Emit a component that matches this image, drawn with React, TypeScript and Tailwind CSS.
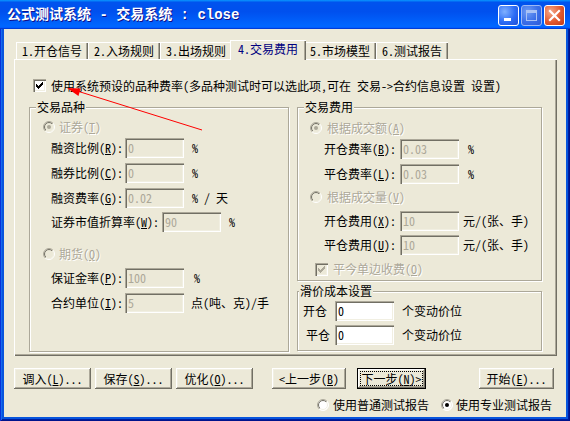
import React from "react";

const SUNKEN =
  "shadow-[inset_1px_1px_0_#aca899,inset_2px_2px_0_#716f64,inset_-1px_-1px_0_#ffffff,inset_-2px_-2px_0_#f1efe2]";
const RAISED =
  "shadow-[inset_-1px_-1px_0_#716f64,inset_1px_1px_0_#ffffff,inset_-2px_-2px_0_#aca899,inset_2px_2px_0_#f1efe2]";
const ETCHED =
  "border border-[#aca899] shadow-[inset_1px_1px_0_#ffffff,1px_1px_0_#ffffff]";
const DIS = "text-[#aca899] [text-shadow:1px_1px_0_#ffffff]";

function Input({
  value,
  disabled = true,
  className = "",
}: {
  value: string;
  disabled?: boolean;
  className?: string;
}) {
  return (
    <div
      className={`h-[20px] shrink-0 pl-[3px] pt-[1px] leading-[17px] ${SUNKEN} ${
        disabled ? "bg-[#ece9d8] text-[#aca899]" : "bg-white text-black"
      } ${className}`}
    >
      {value}
    </div>
  );
}

function Radio({ checked, disabled }: { checked?: boolean; disabled?: boolean }) {
  return (
    <svg width="12" height="12" viewBox="0 0 12 12" className="block shrink-0">
      <circle cx="6" cy="6" r="5.5" fill={disabled ? "#ece9d8" : "#ffffff"} stroke="url(#rgo)" />
      <circle cx="6" cy="6" r="4.5" fill="none" stroke="url(#rgi)" />
      {checked && <circle cx="6" cy="6" r="2" fill={disabled ? "#aca899" : "#000000"} />}
    </svg>
  );
}

function Check({ disabled }: { disabled?: boolean }) {
  return (
    <div className={`w-[13px] h-[13px] shrink-0 ${SUNKEN} ${disabled ? "bg-[#ece9d8]" : "bg-white"}`}>
      <svg width="13" height="13" viewBox="0 0 13 13" className="block">
        <path
          fill={disabled ? "#aca899" : "#000000"}
          d="M9 3h1v1h-1z M8 4h2v1h-2z M3 5h1v1h-1z M7 5h3v1h-3z M3 6h2v1h-2z M6 6h3v1h-3z M3 7h5v1h-5z M4 8h3v1h-3z M5 9h1v1h-1z"
        />
      </svg>
    </div>
  );
}

function Btn({ children, className = "" }: { children: React.ReactNode; className?: string }) {
  return (
    <div
      className={`h-[21px] shrink-0 flex items-center justify-center whitespace-nowrap bg-[#ece9d8] ${RAISED} ${className}`}
    >
      {children}
    </div>
  );
}

function Row({
  label,
  value,
  unit,
  labelW,
  className = "",
  unitMl = "ml-[8px]",
}: {
  label: React.ReactNode;
  value: string;
  unit?: React.ReactNode;
  labelW: string;
  className?: string;
  unitMl?: string;
}) {
  return (
    <div className={`flex items-center h-[20px] ${className}`}>
      <div className={`${labelW} shrink-0 whitespace-nowrap`}>{label}</div>
      <Input value={value} className="w-[59px]" />
      {unit && <div className={`${unitMl} whitespace-nowrap`}>{unit}</div>}
    </div>
  );
}

const tabs = ["1.开仓信号", "2.入场规则", "3.出场规则", "4.交易费用", "5.市场模型", "6.测试报告"];

export default function App() {
  return (
    <div className="relative w-[570px] h-[421px] overflow-hidden bg-white font-['Noto_Sans_CJK_SC',sans-serif] [font-feature-settings:'hwid'] text-[12px] leading-[14px] text-black">
      <svg width="0" height="0" className="absolute">
        <defs>
          <linearGradient id="rgo" x1="0" y1="0" x2="1" y2="1">
            <stop offset="0.5" stopColor="#aca899" />
            <stop offset="0.5" stopColor="#ffffff" />
          </linearGradient>
          <linearGradient id="rgi" x1="0" y1="0" x2="1" y2="1">
            <stop offset="0.5" stopColor="#716f64" />
            <stop offset="0.5" stopColor="#f1efe2" />
          </linearGradient>
        </defs>
      </svg>

      <div className="flex flex-col w-full h-full">
        {/* Title bar */}
        <div className="h-[29px] shrink-0 flex items-start bg-[linear-gradient(180deg,#0997ff,#0053ee_8%,#0050ee_40%,#0066ff_88%,#0066ff_93%,#005bff_95%,#003dd7_96%,#003dd7)]">
          <div className="ml-[7px] mt-[7px] text-white font-bold text-[14px] leading-[16px] whitespace-nowrap font-['Liberation_Mono','Noto_Sans_CJK_SC',monospace] [font-feature-settings:normal] [text-shadow:1px_1px_0_#0f1089]">
            公式测试系统 - 交易系统 : close
          </div>
          <div className="ml-auto mt-[5px] mr-[5px] flex">
            <div className="w-[21px] h-[21px] rounded-[3px] border border-white bg-[radial-gradient(circle_at_30%_30%,#7fb0ff,#2c6cf5_55%,#1f4fd8)] relative">
              <div className="absolute left-[5px] top-[12px] w-[7px] h-[3px] bg-white" />
            </div>
            <div className="ml-[2px] w-[21px] h-[21px] rounded-[3px] border border-[#9cb8f5] bg-[radial-gradient(circle_at_30%_30%,#6f9cf5,#3a6ee8_55%,#2c5ad8)] relative">
              <div className="absolute left-[4px] top-[4px] w-[11px] h-[11px] border border-[#a9c2f5] border-t-[3px]" />
            </div>
            <div className="ml-[2px] w-[21px] h-[21px] rounded-[3px] border border-white bg-[radial-gradient(circle_at_30%_30%,#f4a98a,#e2592f_55%,#c23a17)]">
              <svg width="19" height="19" viewBox="0 0 19 19" className="block">
                <path d="M5 5 L14 14 M14 5 L5 14" stroke="#ffffff" strokeWidth="2.2" strokeLinecap="square" />
              </svg>
            </div>
          </div>
        </div>

        {/* Frame + client */}
        <div className="flex-1 flex px-[4px] pb-[4px] bg-[#0855dd] shadow-[inset_1px_0_0_#0831d9,inset_-1px_0_0_#00138c,inset_0_-1px_0_#00138c,inset_2px_0_0_#166aee,inset_-2px_0_0_#001ea0,inset_0_-2px_0_#001ea0]">
          <div className="flex-1 flex flex-col bg-[#ece9d8] pl-[10px] pt-[11px]">
            {/* Tabs */}
            <div className="flex items-end h-[19px] ml-[2px]">
              {tabs.map((t, i) =>
                i === 3 ? (
                  <div
                    key={t}
                    className="relative z-10 w-[76px] -mx-[2px] h-[20px] -mb-px bg-[#ece9d8] flex items-center justify-center whitespace-nowrap pb-[3px] text-[#000080] shadow-[inset_1px_1px_0_#ffffff,inset_-1px_0_0_#716f64,inset_-2px_0_0_#aca899]"
                  >
                    {t}
                  </div>
                ) : (
                  <div
                    key={t}
                    className="w-[72px] h-[17px] bg-[#ece9d8] flex items-center justify-center whitespace-nowrap shadow-[inset_1px_1px_0_#ffffff,inset_-1px_0_0_#716f64,inset_-2px_0_0_#aca899]"
                  >
                    {t}
                  </div>
                )
              )}
            </div>

            {/* Panel */}
            <div className="w-[543px] h-[297px] shrink-0 bg-[#ece9d8] shadow-[inset_1px_1px_0_#ffffff,inset_-1px_-1px_0_#716f64,inset_-2px_-2px_0_#aca899] flex flex-col pt-[20px] pl-[15px]">
              <div className="flex items-center h-[13px] ml-[4px]">
                <Check />
                <div className="ml-[5px] whitespace-nowrap">
                  使用系统预设的品种费率(多品种测试时可以选此项,可在 交易-&gt;合约信息设置 设置)
                </div>
              </div>

              <div className="mt-[15px] flex gap-[8px]">
                {/* Left group */}
                <div className={`relative w-[260px] h-[245px] ${ETCHED} flex flex-col pt-[12px]`}>
                  <span className="absolute -top-[8px] left-[6px] px-[1px] bg-[#ece9d8] leading-[14px]">交易品种</span>
                  <div className="flex items-center h-[14px] ml-[13px]">
                    <Radio checked disabled />
                    <span className={`ml-[4px] ${DIS}`}>
                      证券(<u>T</u>)
                    </span>
                  </div>
                  <Row className="mt-[4px] ml-[21px]" labelW="w-[74px]" label={<>融资比例(<u>R</u>):</>} value="0" unit="%" />
                  <Row className="mt-[5px] ml-[21px]" labelW="w-[74px]" label={<>融券比例(<u>C</u>):</>} value="0" unit="%" />
                  <Row className="mt-[5px] ml-[21px]" labelW="w-[74px]" label={<>融资费率(<u>G</u>):</>} value="0.02" unit="% / 天" />
                  <Row className="mt-[4px] ml-[21px]" labelW="w-[111px]" label={<>证券市值折算率(<u>W</u>):</>} value="90" unit="%" />
                  <div className="flex items-center h-[14px] ml-[13px] mt-[15px]">
                    <Radio disabled />
                    <span className={`ml-[4px] ${DIS}`}>
                      期货(<u>Q</u>)
                    </span>
                  </div>
                  <Row className="mt-[7px] ml-[21px]" labelW="w-[74px]" label={<>保证金率(<u>P</u>):</>} value="100" unit="%" unitMl="ml-[10px]" />
                  <Row className="mt-[5px] ml-[21px]" labelW="w-[74px]" label={<>合约单位(<u>I</u>):</>} value="5" unit="点(吨、克)/手" unitMl="ml-[7px]" />
                </div>

                {/* Right column */}
                <div className="flex flex-col w-[245px]">
                  <div className={`relative h-[174px] ${ETCHED} flex flex-col pt-[13px]`}>
                    <span className="absolute -top-[8px] left-[6px] px-[1px] bg-[#ece9d8] leading-[14px]">交易费用</span>
                    <div className="flex items-center h-[14px] ml-[12px]">
                      <Radio checked disabled />
                      <span className={`ml-[5px] ${DIS}`}>
                        根据成交额(<u>A</u>)
                      </span>
                    </div>
                    <Row className="mt-[4px] ml-[26px]" labelW="w-[76px]" label={<>开仓费率(<u>B</u>):</>} value="0.03" unit="%" unitMl="ml-[9px]" />
                    <Row className="mt-[5px] ml-[26px]" labelW="w-[76px]" label={<>平仓费率(<u>L</u>):</>} value="0.03" unit="%" unitMl="ml-[9px]" />
                    <div className="flex items-center h-[14px] ml-[12px] mt-[6px]">
                      <Radio disabled />
                      <span className={`ml-[5px] ${DIS}`}>
                        根据成交量(<u>V</u>)
                      </span>
                    </div>
                    <Row className="mt-[7px] ml-[26px]" labelW="w-[76px]" label={<>开仓费用(<u>X</u>):</>} value="10" unit="元/(张、手)" unitMl="ml-[4px]" />
                    <Row className="mt-[4px] ml-[26px]" labelW="w-[76px]" label={<>平仓费用(<u>U</u>):</>} value="10" unit="元/(张、手)" unitMl="ml-[4px]" />
                    <div className="flex items-center h-[14px] ml-[17px] mt-[7px]">
                      <Check disabled />
                      <span className={`ml-[5px] ${DIS}`}>
                        平今单边收费(<u>O</u>)
                      </span>
                    </div>
                  </div>

                  <div className={`relative mt-[10px] h-[60px] ${ETCHED} flex flex-col pt-[9px]`}>
                    <span className="absolute -top-[8px] left-[1px] px-[1px] bg-[#ece9d8] leading-[14px]">滑价成本设置</span>
                    <div className="flex items-center h-[20px]">
                      <div className="ml-[5px] w-[32px]">开仓</div>
                      <Input value="0" disabled={false} className="w-[59px]" />
                      <div className="ml-[8px] whitespace-nowrap">个变动价位</div>
                    </div>
                    <div className="flex items-center h-[20px] mt-[4px]">
                      <div className="ml-[8px] w-[29px]">平仓</div>
                      <Input value="0" disabled={false} className="w-[59px]" />
                      <div className="ml-[8px] whitespace-nowrap">个变动价位</div>
                    </div>
                  </div>
                </div>
              </div>
            </div>

            {/* Buttons */}
            <div className="flex mt-[12px]">
              <Btn className="w-[77px]">
                调入(<u>L</u>)...
              </Btn>
              <Btn className="w-[77px] ml-[4px]">
                保存(<u>S</u>)...
              </Btn>
              <Btn className="w-[77px] ml-[4px]">
                优化(<u>O</u>)...
              </Btn>
              <Btn className="w-[74px] ml-[19px]">
                &lt;上一步(<u>B</u>)
              </Btn>
              <div className="w-[69px] ml-[11px] h-[21px] border border-black shrink-0">
                <div className={`w-full h-full bg-[#ece9d8] ${RAISED} p-[2px]`}>
                  <div className="w-full h-full border border-dotted border-black flex items-center justify-center whitespace-nowrap">
                    下一步(<u>N</u>)&gt;
                  </div>
                </div>
              </div>
              <Btn className="w-[75px] ml-[53px]">
                开始(<u>E</u>)...
              </Btn>
            </div>

            {/* Radios */}
            <div className="flex items-center h-[12px] mt-[10px]">
              <div className="ml-[303px]">
                <Radio />
              </div>
              <span className="ml-[4px]">使用普通测试报告</span>
              <div className="ml-[12px]">
                <Radio checked />
              </div>
              <span className="ml-[3px]">使用专业测试报告</span>
            </div>
          </div>
        </div>
      </div>

      {/* Red annotation arrow */}
      <svg width="570" height="421" className="absolute left-0 top-0 pointer-events-none">
        <line x1="202" y1="130" x2="74" y2="90" stroke="#ff0000" strokeWidth="1" />
        <polygon points="67,88 78.5,96 80.5,88.5" fill="#ff0000" />
      </svg>
    </div>
  );
}
